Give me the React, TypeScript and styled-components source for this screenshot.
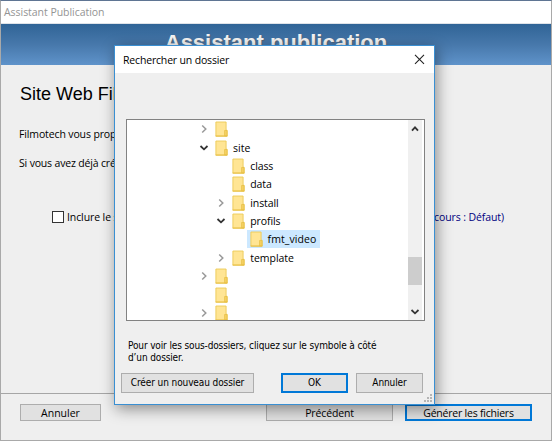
import React from 'react';
import styled, { createGlobalStyle, css } from 'styled-components';

const GlobalStyle = createGlobalStyle`
  *, *::before, *::after { box-sizing: border-box; }
  body { margin: 0; overflow: hidden; background: #efefef; }
`;

const Screen = styled.div`
  position: relative;
  width: 552px;
  height: 441px;
  overflow: hidden;
  font: 10.5px/18px "Open Sans", "Noto Sans", sans-serif;
  color: #000;
`;

const Text = styled.span<{ $track?: number }>`
  white-space: pre;
  letter-spacing: ${(p) => p.$track ?? 0}px;
`;

/* Wizard window */
const Wizard = styled.div`
  display: flex;
  flex-direction: column;
  height: 441px;
  border: 1px solid #a9a9a9;
  border-top-color: #5f7593;
  background: #efefef;
`;

const WizardTitle = styled.div`
  height: 22px;
  padding: 2px 0 0 3px;
  background: #fff;
  color: #949494;
`;

const Banner = styled.div`
  height: 42px;
  border-top: 1px solid #dfe3e8;
  background: linear-gradient(#306496, #4778ab 50%, #5f93ca);
  color: #f4f4f4;
  text-align: center;
  font: bold 22px/25px "Liberation Sans", Arial, sans-serif;
  padding-top: 6px;
  text-shadow: 1px 1px 1px #55657a;
`;

const WizardBody = styled.div`
  display: flex;
  flex-direction: column;
  height: 328px;
  padding: 19px 45px 0 18px;
`;

const Heading = styled.h1`
  margin: 0 0 21px 1px;
  font: 18px/20px "Liberation Sans", Arial, sans-serif;
`;

const Paragraph = styled.p`
  margin: 0 0 11px;
  height: 18px;
`;

const OptionRow = styled.div`
  display: flex;
  align-items: center;
  margin: 25px 2px 0 33px;
  height: 18px;
`;

const Checkbox = styled.span`
  width: 12px;
  height: 12px;
  margin-right: 3px;
  border: 1px solid #333;
  background: #fff;
`;

const Profile = styled.span`
  margin-left: auto;
  color: #000080;
`;

const WizardFooter = styled.div`
  display: flex;
  height: 47px;
  padding: 10px 19px 0;
  border-top: 1px solid #a6a6a6;
`;

const Button = styled.button<{ $width: number; $primary?: boolean; $dialog?: boolean }>`
  display: flex;
  align-items: center;
  justify-content: center;
  width: ${(p) => p.$width}px;
  height: 17px;
  padding: 0;
  border: 1px solid #adadad;
  background: #e1e1e1;
  color: #000;
  font: inherit;
  ${(p) => p.$primary && css`border: 2px solid #0078d7;`}
  ${(p) => p.$dialog && css`height: 20px;`}
`;

const Spacer = styled.span`flex: 1;`;
const Gap = styled.span<{ $w: number }>`width: ${(p) => p.$w}px;`;

/* Folder picker floating over the wizard */
const Dialog = styled.div`
  position: absolute;
  left: 114px;
  top: 45px;
  width: 321px;
  height: 360px;
  display: flex;
  flex-direction: column;
  border: 1px solid #3a8fd2;
  background: #efefef;
  box-shadow: 2px 4px 14px rgba(0, 0, 0, 0.42);
`;

const DialogTitle = styled.div`
  display: flex;
  align-items: center;
  justify-content: space-between;
  height: 27px;
  padding: 0 9px 0 8px;
  background: #fff;
`;

const TreeBox = styled.div`
  display: flex;
  width: 299px;
  height: 202px;
  margin: 46px 0 0 11px;
  border: 1px solid #828282;
  background: #fff;
  overflow: hidden;
`;

const Tree = styled.div`
  flex: 1;
  display: flex;
  flex-direction: column;
`;

const Row = styled.div<{ $level: number }>`
  display: flex;
  align-items: center;
  flex: none;
  height: 18.38px;
  padding-left: ${(p) => 71.5 + p.$level * 17.3}px;
`;

const Toggle = styled.span`
  display: flex;
  width: 13.5px;
`;

const Item = styled.span<{ $selected?: boolean }>`
  display: flex;
  align-items: center;
  height: 18px;
  padding: 0 4px 0 3px;
  background: ${(p) => (p.$selected ? '#cce8ff' : 'transparent')};
`;

const ItemName = styled(Text)`margin-left: 5px;`;

const Scrollbar = styled.div`
  display: flex;
  flex-direction: column;
  align-items: center;
  width: 14px;
  margin-right: 2px;
  padding: 4px 0 3px;
  background: #f0f0f0;
`;

const Thumb = styled.div`
  width: 14px;
  height: 28px;
  margin: 123px 0 auto;
  background: #cdcdcd;
`;

const Hint = styled.p`
  margin: 19px 0 0 13px;
  font: 10px/12px "DejaVu Sans Condensed", "DejaVu Sans", sans-serif;
  font-stretch: condensed;
`;

const DialogFooter = styled.div`
  display: flex;
  margin: 9px 0 0 6px;
  font: 10px/12px "DejaVu Sans Condensed", "DejaVu Sans", sans-serif;
  font-stretch: condensed;
`;

const Grip = styled.svg`
  position: absolute;
  right: 2px;
  bottom: 2px;
`;

const Folder = () => (
  <svg width="13" height="16" viewBox="0 0 13 16">
    <path d="M.9 1h10.2v8.3h1.1v5.8H.9z" fill="#ffe594" stroke="#eccb57" strokeWidth=".9" />
    <path d="M9.6 9.5h2.4v5.4H9.6z" fill="#f6d264" stroke="#e5bd42" strokeWidth=".7" />
    <path d="M.6 15.1h11.8" stroke="#e8bf43" />
  </svg>
);

const paths = { right: 'M3.2 1.5 6.8 5 3.2 8.5', down: 'M1.5 3 5 6.3 8.5 3', up: 'M2 6.7 5 3.3 8 6.7' };

const Chevron = ({ dir, color, width = 1.5 }: { dir: keyof typeof paths; color: string; width?: number }) => (
  <svg width="10" height="10" viewBox="0 0 10 10">
    <path d={paths[dir]} fill="none" stroke={color} strokeWidth={width} />
  </svg>
);

type Node = { name?: string; level: number; toggle?: 'right' | 'down'; selected?: boolean; track?: number };

const nodes: Node[] = [
  { level: 0, toggle: 'right' },
  { name: 'site', level: 0, toggle: 'down' },
  { name: 'class', level: 1, track: -0.12 },
  { name: 'data', level: 1, track: -0.1 },
  { name: 'install', level: 1, toggle: 'right', track: -0.1 },
  { name: 'profils', level: 1, toggle: 'down', track: -0.1 },
  { name: 'fmt_video', level: 2, selected: true, track: 0.06 },
  { name: 'template', level: 1, toggle: 'right', track: -0.05 },
  { level: 0, toggle: 'right' },
  { level: 0 },
  { level: 0, toggle: 'right' },
];

export default function App() {
  return (
    <Screen>
      <GlobalStyle />
      <Wizard>
        <WizardTitle><Text $track={-0.04}>Assistant Publication</Text></WizardTitle>
        <Banner>Assistant publication</Banner>
        <WizardBody>
          <Heading>Site Web Fil</Heading>
          <Paragraph><Text $track={-0.13}>Filmotech vous prop</Text></Paragraph>
          <Paragraph><Text $track={-0.17}>Si vous avez déjà cré</Text></Paragraph>
          <OptionRow>
            <Checkbox />
            <Text $track={-0.1}>Inclure le s</Text>
            <Profile><Text $track={-0.1}>cours : Défaut)</Text></Profile>
          </OptionRow>
        </WizardBody>
        <WizardFooter>
          <Button $width={81}><Text>Annuler</Text></Button>
          <Spacer />
          <Button $width={127}><Text $track={-0.15}>Précédent</Text></Button>
          <Gap $w={12} />
          <Button $width={127} $primary><Text $track={-0.22}>Générer les fichiers</Text></Button>
        </WizardFooter>
      </Wizard>

      <Dialog>
        <DialogTitle>
          <Text $track={-0.17}>Rechercher un dossier</Text>
          <svg width="11" height="11" viewBox="0 0 11 11">
            <path d="M1 .8l9 9M10 .8l-9 9" stroke="#222" strokeWidth="1.1" />
          </svg>
        </DialogTitle>
        <TreeBox>
          <Tree>
            {nodes.map((n, i) => (
              <Row key={i} $level={n.level}>
                <Toggle>
                  {n.toggle && (
                    <Chevron dir={n.toggle} color={n.toggle === 'down' ? '#333' : '#999'} width={n.toggle === 'down' ? 1.8 : 1.5} />
                  )}
                </Toggle>
                <Item $selected={n.selected}>
                  <Folder />
                  {n.name && <ItemName $track={n.track}>{n.name}</ItemName>}
                </Item>
              </Row>
            ))}
          </Tree>
          <Scrollbar>
            <Chevron dir="up" color="#333" width={1.8} />
            <Thumb />
            <Chevron dir="down" color="#333" width={1.8} />
          </Scrollbar>
        </TreeBox>
        <Hint>
          <Text $track={-0.13}>{'Pour voir les sous-dossiers, cliquez sur le symbole à côté\nd’un dossier.'}</Text>
        </Hint>
        <DialogFooter>
          <Button $width={133} $dialog><Text $track={-0.1}>Créer un nouveau dossier</Text></Button>
          <Gap $w={27} />
          <Button $width={67} $dialog $primary><Text>OK</Text></Button>
          <Gap $w={8} />
          <Button $width={67} $dialog><Text $track={-0.1}>Annuler</Text></Button>
        </DialogFooter>
        <Grip width="8" height="8" viewBox="0 0 8 8" fill="#b5b5b5">
          <path d="M6 0h2v2H6zM3 3h2v2H3zM6 3h2v2H6zM0 6h2v2H0zM3 6h2v2H3zM6 6h2v2H6z" />
        </Grip>
      </Dialog>
    </Screen>
  );
}
